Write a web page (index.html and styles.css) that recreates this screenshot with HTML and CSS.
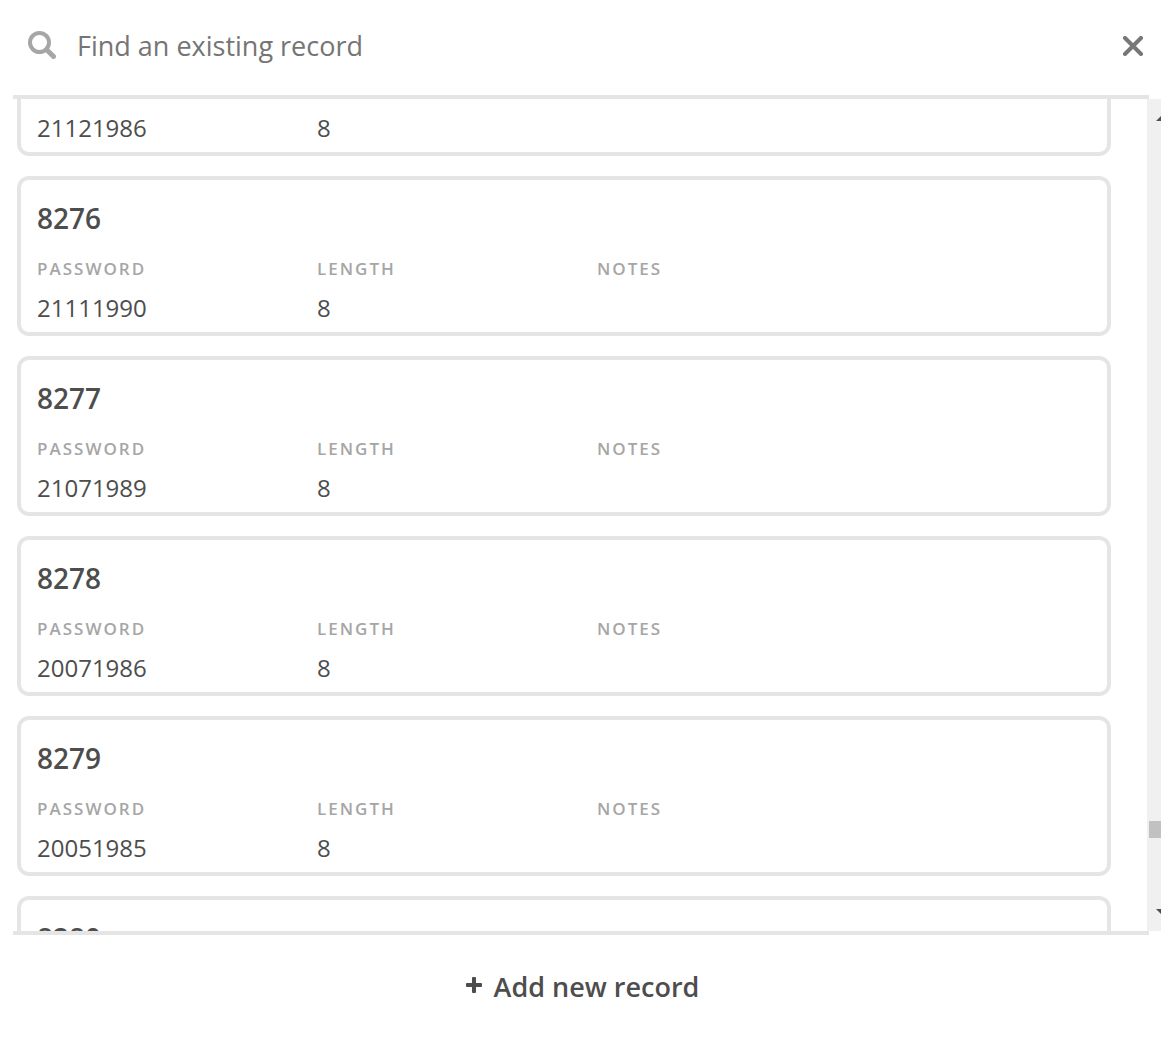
FILE: index.html
```html
<!DOCTYPE html>
<html lang="en">
<head>
<meta charset="utf-8">
<title>Find an existing record</title>
<link rel="stylesheet" href="styles.css">
</head>
<body>
<div class="picker">
  <header class="search">
    <svg class="search-icon" viewBox="0 0 28 28" aria-hidden="true"><circle cx="11.500" cy="11.500" r="9.500" fill="none" stroke="#a6a6a6" stroke-width="4"/><path d="M18.500 18.500L25.500 25.500" stroke="#a6a6a6" stroke-width="5" stroke-linecap="round"/></svg>
    <input class="search-input" type="text" placeholder="Find an existing record" aria-label="Find an existing record">
    <button class="close" type="button" aria-label="Close"><svg class="close-icon" viewBox="0 0 20 20" aria-hidden="true"><path d="M2 2L18 18M18 2L2 18" stroke="#777" stroke-width="4" stroke-linecap="round"/></svg></button>
  </header>
  <main class="results">
    <div class="viewport">
      <div class="records">
        <article class="card"><h2 class="title">8275</h2><dl class="fields"><div class="field"><dt class="label">PASSWORD</dt><dd class="value">21121986</dd></div><div class="field"><dt class="label">LENGTH</dt><dd class="value">8</dd></div><div class="field"><dt class="label">NOTES</dt><dd class="value"></dd></div></dl></article>
        <article class="card"><h2 class="title">8276</h2><dl class="fields"><div class="field"><dt class="label">PASSWORD</dt><dd class="value">21111990</dd></div><div class="field"><dt class="label">LENGTH</dt><dd class="value">8</dd></div><div class="field"><dt class="label">NOTES</dt><dd class="value"></dd></div></dl></article>
        <article class="card"><h2 class="title">8277</h2><dl class="fields"><div class="field"><dt class="label">PASSWORD</dt><dd class="value">21071989</dd></div><div class="field"><dt class="label">LENGTH</dt><dd class="value">8</dd></div><div class="field"><dt class="label">NOTES</dt><dd class="value"></dd></div></dl></article>
        <article class="card"><h2 class="title">8278</h2><dl class="fields"><div class="field"><dt class="label">PASSWORD</dt><dd class="value">20071986</dd></div><div class="field"><dt class="label">LENGTH</dt><dd class="value">8</dd></div><div class="field"><dt class="label">NOTES</dt><dd class="value"></dd></div></dl></article>
        <article class="card"><h2 class="title">8279</h2><dl class="fields"><div class="field"><dt class="label">PASSWORD</dt><dd class="value">20051985</dd></div><div class="field"><dt class="label">LENGTH</dt><dd class="value">8</dd></div><div class="field"><dt class="label">NOTES</dt><dd class="value"></dd></div></dl></article>
        <article class="card"><h2 class="title">8280</h2></article>
      </div>
    </div>
    <div class="scrollbar" aria-hidden="true">
      <svg class="arrow" viewBox="0 0 16 6"><path d="M0 6L8 -2L16 6Z" fill="#505050"/></svg>
      <div class="track"><div class="thumb"></div></div>
      <svg class="arrow" viewBox="0 0 16 6"><path d="M0 0L8 8L16 0Z" fill="#505050"/></svg>
    </div>
  </main>
  <footer class="footer">
    <button class="add" type="button"><svg class="plus" viewBox="0 0 16 16" aria-hidden="true"><path d="M8 1V15M1 8H15" stroke="#4d4d4d" stroke-width="4"/><path d="M7 1H9M7 15H9M1 7V9M15 7V9" stroke="#4d4d4d" stroke-width="2" stroke-linecap="round"/></svg>Add new record</button>
  </footer>
</div>
</body>
</html>
```
FILE: styles.css
```css
* { box-sizing: border-box; }

body {
  margin: 0;
  background: #fff;
  color: #4d4d4d;
  font-family: "Segoe UI", "Open Sans", "Noto Sans", sans-serif;
}

.picker {
  display: flex;
  flex-direction: column;
  height: 100vh;
}

.search {
  display: flex;
  align-items: center;
  height: 95px;
  padding: 0 16px 4px 28px;
}

.search-icon {
  flex: none;
  width: 28px;
  height: 28px;
  margin-bottom: 2px;
}

.search-input {
  flex: 1;
  min-width: 0;
  height: 48px;
  margin: 0 20px;
  padding: 0 1px;
  border: 0;
  outline: 0;
  background: transparent;
  color: #4d4d4d;
  font: 27px/48px "Segoe UI", "Open Sans", "Noto Sans", sans-serif;
}

.search-input::placeholder { color: #757575; opacity: 1; }

.close {
  display: flex;
  padding: 0;
  border: 0;
  background: none;
}

.close-icon { width: 24px; height: 20px; }

/* The rules above and below the list stop short of the window edges. */
.search, .footer { position: relative; flex: none; }

.search::after, .footer::before {
  content: "";
  position: absolute;
  left: 13px;
  right: 12px;
  height: 4px;
  background: #e5e5e5;
}

.search::after { top: 100%; }
.footer::before { top: 0; }

.results {
  display: flex;
  flex: 1;
  min-height: 0;
  padding-top: 4px;
}

.viewport {
  flex: 1;
  min-width: 0;
  padding: 0 36px 0 17px;
  overflow: hidden;
}

/* The list is shown scrolled part of the way through its first card. */
.records {
  display: flex;
  flex-direction: column;
  gap: 20px;
  margin-top: -103px;
}

.card {
  height: 160px;
  padding: 20px 16px 0;
  border: 4px solid #e5e5e5;
  border-radius: 12px;
}

.title {
  margin: 0;
  font-size: 28px;
  font-weight: 600;
  line-height: 36px;
}

.fields { display: flex; margin: 16px 0 0; }
.field { width: 280px; }

.label {
  color: #a6a6a6;
  font-size: 17px;
  font-weight: 600;
  letter-spacing: 2px;
  line-height: 34px;
}

.value { margin: 2px 0 0; font-size: 24px; line-height: 40px; }

.scrollbar {
  display: flex;
  flex-direction: column;
  width: 14px;
  padding: 16px 0;
  overflow: hidden;
  background: #f0f0f0;
}

.arrow {
  flex: none;
  width: 16px;
  height: 6px;
  margin-left: 9px;
}

.track {
  display: flex;
  flex: 1;
  flex-direction: column;
  justify-content: flex-end;
  padding: 0 0 71px 2px;
}

.thumb { height: 17px; background: #c1c1c1; }

.footer {
  display: flex;
  justify-content: center;
  height: 106px;
  padding: 32px 0 0 4px;
}

.add {
  display: flex;
  align-items: center;
  gap: 12px;
  height: 48px;
  padding: 0;
  border: 0;
  background: none;
  color: #4d4d4d;
  font: 600 27px/48px "Segoe UI", "Open Sans", "Noto Sans", sans-serif;
}

.plus { width: 16px; height: 16px; margin-bottom: 4px; }
```
